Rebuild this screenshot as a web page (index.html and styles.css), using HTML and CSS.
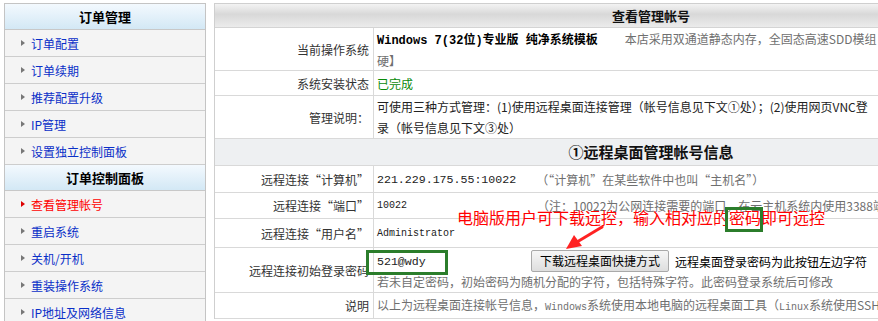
FILE: index.html
```html
<!DOCTYPE html>
<html lang="zh-CN">

<head>
  <meta charset="UTF-8">
  <meta name="viewport" content="width=device-width, initial-scale=1.0">
  <title>查看管理帐号</title>
  <link rel="stylesheet" href="styles.css">
</head>

<body>
  <div class="page">
    <div class="menu">
      <div class="menu-titre">订单管理</div>
      <div class="menu-item">订单配置</div>
      <div class="menu-item">订单续期</div>
      <div class="menu-item">推荐配置升级</div>
      <div class="menu-item">IP管理</div>
      <div class="menu-item">设置独立控制面板</div>
      <div class="menu-titre">订单控制面板</div>
      <div class="menu-item actif">查看管理帐号</div>
      <div class="menu-item">重启系统</div>
      <div class="menu-item">关机/开机</div>
      <div class="menu-item">重装操作系统</div>
      <div class="menu-item">IP地址及网络信息</div>
    </div>

    <div class="compte">
      <div class="compte-titre">查看管理帐号</div>

      <div class="ligne h43">
        <div class="label">当前操作系统</div>
        <div class="valeur">
          <div><b class="os">Windows 7(32位)专业版 纯净系统模板</b><span class="gris pub">本店采用双通道静态内存，全固态高速SDD模组</span></div>
          <div class="gris">硬】</div>
        </div>
      </div>

      <div class="ligne h25">
        <div class="label">系统安装状态</div>
        <div class="valeur"><span class="vert">已完成</span></div>
      </div>

      <div class="ligne h43">
        <div class="label">管理说明：</div>
        <div class="valeur haut">
          <div>可使用三种方式管理：(1)使用远程桌面连接管理（帐号信息见下文①处）；(2)使用网页VNC登</div>
          <div>录（帐号信息见下文③处）</div>
        </div>
      </div>

      <div class="section">①远程桌面管理帐号信息</div>

      <div class="ligne h27">
        <div class="label">远程连接“计算机”</div>
        <div class="valeur en-ligne"><span class="mono ip">221.229.175.55:10022</span><span class="gris">（“计算机”在某些软件中也叫“主机名”）</span></div>
      </div>

      <div class="ligne h26">
        <div class="label">远程连接“端口”</div>
        <div class="valeur en-ligne"><span class="mono petit port">10022</span><span class="gris">（注：10022为公网连接需要的端口，在云主机系统内使用3388端口</span></div>
      </div>

      <div class="ligne h29">
        <div class="label">远程连接“用户名”</div>
        <div class="valeur"><span class="mono petit">Administrator</span></div>
      </div>

      <div class="ligne h45">
        <div class="label">远程连接初始登录密码</div>
        <div class="valeur">
          <div class="mdp-ligne">
            <span class="mono mdp">521@wdy</span>
            <span class="bouton">下载远程桌面快捷方式</span>
            <span class="aide">远程桌面登录密码为此按钮左边字符</span>
          </div>
          <div class="gris">若未自定密码，初始密码为随机分配的字符，包括特殊字符。此密码登录系统后可修改</div>
        </div>
      </div>

      <div class="ligne h26">
        <div class="label">说明</div>
        <div class="valeur"><span class="gris">以上为远程桌面连接帐号信息，<span class="mono petit">Windows</span>系统使用本地电脑的远程桌面工具（<span class="mono petit">Linux</span>系统使用SSH工具</span></div>
      </div>
    </div>

    <!-- annotations par-dessus la capture -->
    <div class="note-rouge">电脑版用户可下载远控，输入相对应的密码即可远控</div>
    <div class="cadre cadre-code"></div>
    <div class="cadre cadre-mdp"></div>
    <svg class="fleche" width="46" height="32" viewBox="0 0 46 32">
      <line x1="41" y1="5" x2="16" y2="20" stroke="#f22" stroke-width="3" stroke-linecap="round"></line>
      <polygon points="5,27 21,24 13,13" fill="#f22"></polygon>
    </svg>
  </div>
</body>

</html>
```

FILE: styles.css
```css
html,
body {
  margin: 0;
  overflow: hidden;
  background: #fff;
}

body {
  font-family: "Noto Sans CJK SC", "Liberation Sans", sans-serif;
  font-size: 12px;
  color: #222;
}

.page {
  position: relative;
  display: flex;
  align-items: flex-start;
  gap: 8px;
  width: 1088px;
  padding: 3px 0 0 4px;
}

/* menu de gauche */
.menu {
  width: 202px;
  flex-shrink: 0;
  box-sizing: border-box;
  border: 1px solid #c4c4c4;
  background: #f4f4f4;
}

.menu-titre {
  height: 26px;
  box-sizing: border-box;
  line-height: 25px;
  text-align: center;
  font-size: 13px;
  font-weight: bold;
  color: #000;
  background: linear-gradient(#f3f9fe, #d3e8f5);
  border-bottom: 1px solid #c8c8c8;
}

.menu-item {
  display: flex;
  align-items: center;
  height: 27px;
  box-sizing: border-box;
  padding-left: 16px;
  color: #0a2fc8;
  border-bottom: 1px solid #cdcdcd;
}

.menu-item::before {
  content: "";
  width: 0;
  height: 0;
  margin-right: 6px;
  border-left: 4px solid #777;
  border-top: 3px solid transparent;
  border-bottom: 3px solid transparent;
}

.menu-item.actif {
  color: #f00;
}

.menu-item.actif::before {
  border-left-color: #d00;
}

/* tableau du compte */
.compte {
  width: 874px;
  flex-shrink: 0;
  box-sizing: border-box;
  border: 1px solid #cfcfcf;
  border-bottom: none;
}

.compte-titre {
  height: 24px;
  box-sizing: border-box;
  line-height: 23px;
  text-align: center;
  font-size: 13px;
  font-weight: bold;
  color: #111;
  background: linear-gradient(#f3f3f3, #d8d8d8 45%, #ebebeb);
  border-bottom: 1px solid #d4d4d4;
}

.ligne {
  display: grid;
  grid-template-columns: 159px auto;
  box-sizing: border-box;
  border-bottom: 1px solid #d9d9d9;
}

.h25 { height: 25px; }
.h26 { height: 26px; }
.h27 { height: 27px; }
.h29 { height: 29px; }
.h43 { height: 43px; }
.h45 { height: 45px; }

.label {
  display: flex;
  align-items: center;
  justify-content: flex-end;
  padding-right: 4px;
  border-right: 1px solid #d9d9d9;
  color: #333;
  white-space: nowrap;
}

.valeur {
  display: flex;
  flex-direction: column;
  justify-content: center;
  padding-left: 3px;
  line-height: 19px;
  white-space: nowrap;
}

.valeur.haut {
  line-height: 21px;
}

.valeur.en-ligne {
  flex-direction: row;
  align-items: center;
  justify-content: flex-start;
}

.os {
  font-family: "Liberation Mono", "Noto Sans CJK SC", monospace;
  font-size: 12px;
  color: #000;
}

.pub {
  margin-left: 27px;
}

.gris {
  color: #6f6f6f;
}

.vert {
  color: #0a8a0a;
}

.mono {
  font-family: "Liberation Mono", monospace;
}

.petit {
  font-size: 10px;
}

.ip {
  font-size: 11.6px;
  margin-right: 20px;
}

.port {
  width: 160px;
}

.section {
  height: 27px;
  box-sizing: border-box;
  line-height: 26px;
  text-align: center;
  font-size: 15px;
  font-weight: bold;
  color: #111;
  background: #eef0f2;
  border-bottom: 1px solid #d9d9d9;
}

.mdp-ligne {
  display: flex;
  align-items: center;
  height: 23px;
}

.mdp {
  width: 154px;
  font-size: 11.6px;
}

.bouton {
  height: 22px;
  box-sizing: border-box;
  padding: 0 8px;
  line-height: 20px;
  color: #000;
  background: linear-gradient(#f6f6f6, #dedede);
  border: 1px solid #a9a9a9;
  border-radius: 2px;
}

.aide {
  margin-left: 6px;
  color: #000;
}

.mdp-ligne + .gris {
  line-height: 18px;
}

/* annotations */
.note-rouge {
  position: absolute;
  left: 457px;
  top: 206px;
  font-family: "Noto Sans CJK SC", sans-serif;
  font-size: 16px;
  line-height: 22px;
  color: #f00;
  white-space: nowrap;
}

.cadre {
  position: absolute;
  box-sizing: border-box;
  border: 3px solid #2b7d2b;
}

.cadre-code {
  left: 725px;
  top: 207px;
  width: 38px;
  height: 25px;
}

.cadre-mdp {
  left: 366px;
  top: 250px;
  width: 82px;
  height: 25px;
}

.fleche {
  position: absolute;
  left: 561px;
  top: 222px;
}
```
